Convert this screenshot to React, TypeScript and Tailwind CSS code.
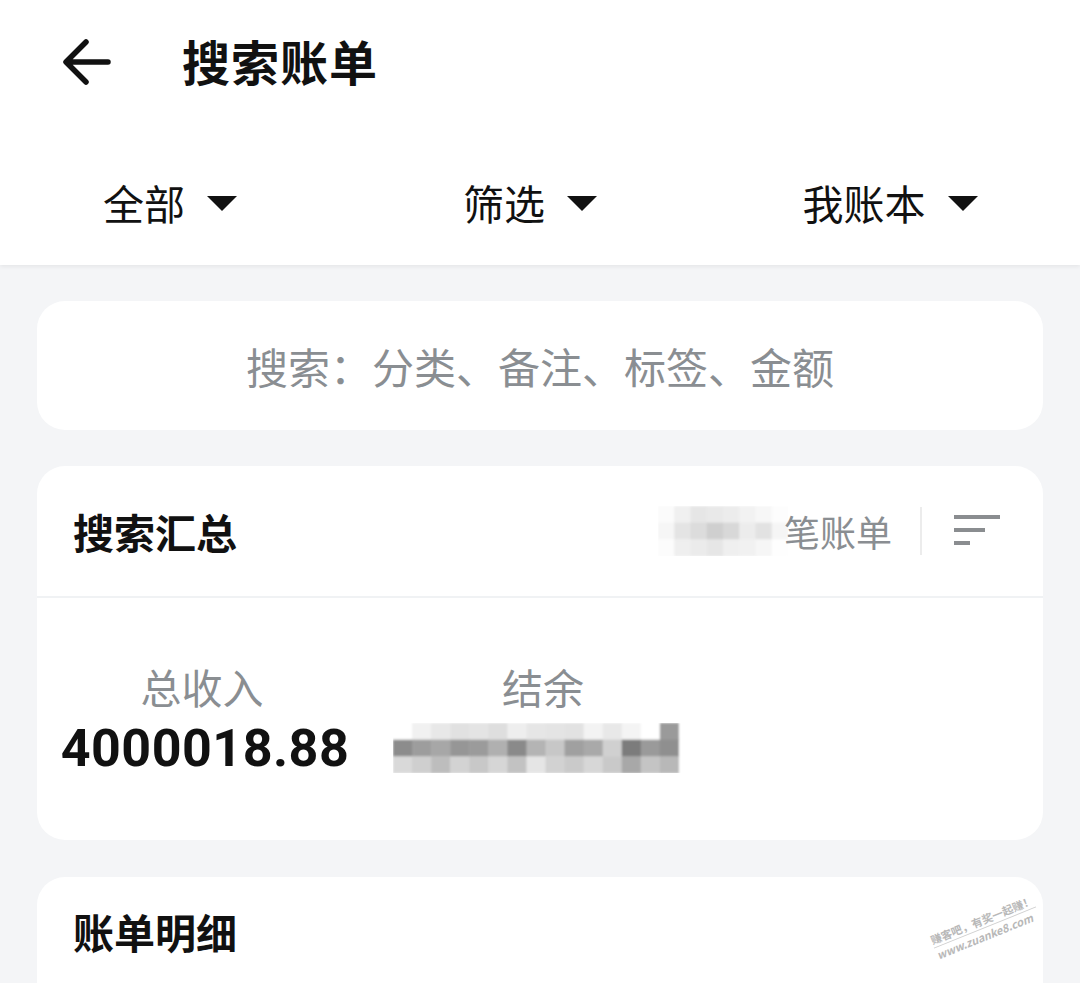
import React from "react";

const FONT = '"Noto Sans CJK SC", "Noto Sans", sans-serif';

function Caret() {
  return (
    <svg width="30" height="16" viewBox="0 0 30 16" className="ml-[22px] mt-[2px]">
      <path d="M0 0 H30 L15 15 Z" fill="#111" />
    </svg>
  );
}

function Pixels({
  w,
  h,
  cols,
  rows,
  data,
}: {
  w: number;
  h: number;
  cols: number;
  rows: number;
  data: string[][];
}) {
  const cw = w / cols;
  const rh = h / rows;
  return (
    <svg width={w} height={h} viewBox={`0 0 ${w} ${h}`}>
      <defs>
        <filter id={`b${w}`} x="-10%" y="-20%" width="120%" height="140%">
          <feGaussianBlur stdDeviation="1.2" />
        </filter>
      </defs>
      <g filter={`url(#b${w})`}>
        {data.map((row, r) =>
          row.map((c, i) => (
            <rect key={`${r}-${i}`} x={i * cw} y={r * rh} width={cw + 0.5} height={rh + 0.5} fill={c} />
          ))
        )}
      </g>
    </svg>
  );
}

const countData = [
  ["#fbfbfb", "#f0f0f0", "#e6e6e6", "#e9e9e9", "#ececec", "#f2f2f2", "#f7f7f7", "#fdfdfd"],
  ["#f6f6f6", "#e4e4e4", "#dcdcdc", "#cfcfcf", "#d8d8d8", "#ececec", "#e2e2e2", "#f5f5f5"],
  ["#fcfcfc", "#efefef", "#ebebeb", "#e6e6e6", "#efefef", "#f1f1f1", "#f6f6f6", "#fefefe"],
];

const valueData = [
  ["#ffffff", "#f1f1f1", "#e8e8e8", "#e1e1e1", "#e4e4e4", "#dedede", "#eeeeee", "#e6e6e6", "#e4e4e4", "#e2e2e2", "#f3f3f3", "#e8e8e8", "#f4f4f4", "#ffffff", "#9a9a9a", "#ffffff"],
  ["#8c8c8c", "#9d9d9d", "#a7a7a7", "#969696", "#9b9b9b", "#b0b0b0", "#8a8a8a", "#b4b4b4", "#c7c7c7", "#a0a0a0", "#a9a9a9", "#d0d0d0", "#7c7c7c", "#9a9a9a", "#8f8f8f", "#ffffff"],
  ["#d9d9d9", "#cfcfcf", "#bdbdbd", "#d3d3d3", "#c8c8c8", "#d6d6d6", "#c2c2c2", "#e5e5e5", "#d2d2d2", "#cacaca", "#d7d7d7", "#c9c9c9", "#a8a8a8", "#c4c4c4", "#b8b8b8", "#ffffff"],
];

export default function App() {
  return (
    <div className="w-[1080px] h-[983px] overflow-hidden bg-[#f4f5f7]" style={{ fontFamily: FONT }}>
      {/* Header */}
      <div className="bg-white h-[265px] shadow-[0_2px_4px_rgba(0,0,0,0.06)] relative z-10">
        <div className="h-[120px] flex items-center pl-[62px]">
          <svg width="50" height="48" viewBox="0 0 50 48" fill="none" className="mt-[4px]">
            <path d="M46 24 H5 M24 4 L4 24 L24 44" stroke="#111" strokeWidth="5.5" strokeLinecap="round" strokeLinejoin="round" />
          </svg>
          <div className="ml-[70px] text-[48px] font-bold text-[#111] leading-none tracking-[1px]">搜索账单</div>
        </div>
        <div className="h-[145px] pt-[20px] grid grid-cols-3 items-center">
          {["全部", "筛选", "我账本"].map((t) => (
            <div key={t} className="flex items-center justify-center pr-[20px]">
              <span className="text-[41px] text-[#111] leading-none">{t}</span>
              <Caret />
            </div>
          ))}
        </div>
      </div>

      {/* Search box */}
      <div className="mx-[37px] mt-[36px] h-[129px] bg-white rounded-[28px] flex items-center justify-center">
        <span className="text-[42px] text-[#8a8e92] leading-none">搜索：分类、备注、标签、金额</span>
      </div>

      {/* Summary */}
      <div className="mx-[37px] mt-[36px] h-[374px] bg-white rounded-[28px] flex flex-col">
        <div className="h-[132px] flex items-center pl-[36px] pr-[43px] border-b-2 border-[#f0f2f4]">
          <span className="text-[41px] font-bold text-[#111] leading-none">搜索汇总</span>
          <div className="ml-auto flex items-center">
            <Pixels w={130} h={50} cols={8} rows={3} data={countData} />
            <span className="text-[36px] text-[#8a8e92] leading-none -ml-[4px]">笔账单</span>
            <div className="w-[2px] h-[48px] bg-[#ececec] ml-[28px]" />
            <svg width="46" height="32" viewBox="0 0 46 32" className="ml-[32px]">
              <rect x="0" y="0" width="46" height="4" fill="#8a8d90" />
              <rect x="0" y="13" width="31" height="4" fill="#8a8d90" />
              <rect x="0" y="26" width="16" height="4" fill="#8a8d90" />
            </svg>
          </div>
        </div>
        <div className="flex pt-[68px]">
          <div className="ml-[20px] w-[296px] flex flex-col items-center">
            <span className="text-[41px] text-[#8a8e92] leading-none pr-[6px]">总收入</span>
            <span className="mt-[16px] text-[52px] font-bold text-[#111] leading-none tracking-[0.5px]" style={{ fontFamily: '"Roboto", "Liberation Sans", sans-serif' }}>
              4000018.88
            </span>
          </div>
          <div className="ml-[40px] w-[300px] flex flex-col items-center">
            <span className="text-[41px] text-[#8a8e92] leading-none">结余</span>
            <div className="mt-[16px] ml-[4px]">
              <Pixels w={305} h={50} cols={16} rows={3} data={valueData} />
            </div>
          </div>
        </div>
      </div>

      {/* Detail */}
      <div className="mx-[37px] mt-[37px] h-[200px] bg-white rounded-[28px] relative">
        <div className="pt-[34px] pl-[36px] text-[41px] font-bold text-[#111] leading-none">账单明细</div>
        <div className="mt-[50px] mx-[36px] h-[2px] bg-[#f0f2f4]" />
        <div className="absolute left-[893px] top-[36px] -rotate-[22deg] text-[#b8b8b8] leading-[13px] font-bold whitespace-nowrap">
          <div className="text-[11px]">赚客吧，有奖一起赚！</div>
          <div className="h-px bg-[#d0d0d0] my-[1px]" />
          <div className="text-[11px] italic">www.zuanke8.com</div>
        </div>
      </div>
    </div>
  );
}
